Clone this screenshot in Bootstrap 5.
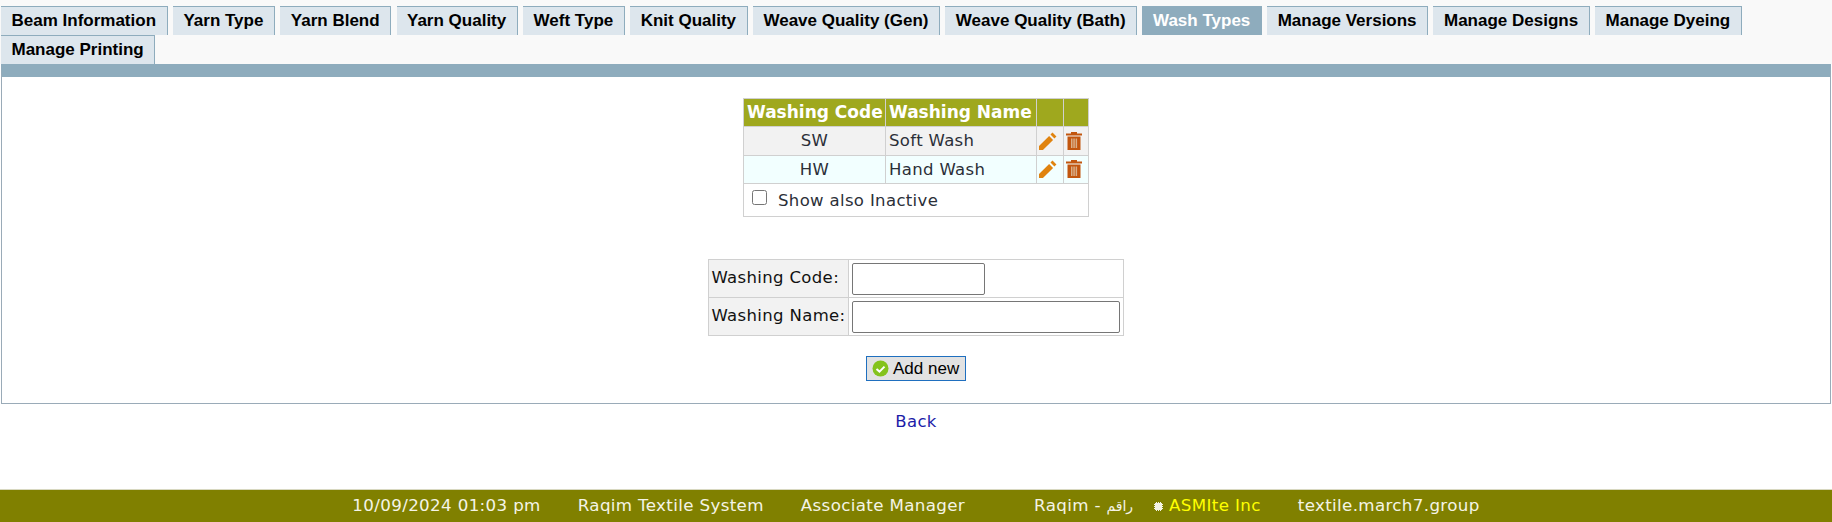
<!DOCTYPE html>
<html lang="en"><head><meta charset="utf-8"><title>Wash Types</title>
<link href="https://cdn.jsdelivr.net/npm/bootstrap@5.3.0/dist/css/bootstrap.min.css" rel="stylesheet">
<style>
html,body{height:100%}
body{background:#fff;font-family:"DejaVu Sans",Verdana,sans-serif;font-size:16.5px;letter-spacing:.35px;color:#222}
.tabstrip{background:#f9f9f9;padding:6px 0 0 1px;gap:0 5.4px}
.tabitem{font:700 17px/27px "Liberation Sans",Arial,sans-serif;letter-spacing:0;height:29px;padding:0 10.5px;background:#dde6ed;color:#000;border-top:1px solid #8eacbd;border-right:1px solid #8eacbd;text-decoration:none}
.tabitem.on{background:#8eacbd;color:#fff}
.panelbox{background:#fff;border:1px solid #9aabb8;border-top:13px solid #8eacbd;height:340px;margin:0 1px;padding-top:21px}
.listgrid,.formgrid{border-collapse:collapse;color:#2b2f38}
.listgrid{width:345px;table-layout:fixed;margin-bottom:42px}
.listgrid td,.listgrid th,.formgrid td{border:1px solid #d0d0d0;padding:0 3px}
.listgrid td{padding-top:2px}
.listgrid th{background:#9fa81e;color:#fff;height:28px;white-space:nowrap;font-weight:700;font-size:17px;letter-spacing:0}
.c1{width:142px}.c2{width:151px}.c3{width:27px}.c4{width:25px}
.listgrid .odd{background:#f2f2f2}.listgrid .even{background:#f2ffff}
.listgrid td{height:28.5px}
.listgrid .foot td{height:33px;padding-left:8px}
.listgrid .icons{padding:0 0 0 2px;line-height:0}
.listgrid input{width:15px;height:15px;margin:0 11px 0 0;vertical-align:1px;appearance:auto}
.formgrid{width:416px;color:#111}
.formgrid .lbl{background:#f2f2f2;width:142px;height:38px;white-space:nowrap}
.formgrid input{display:block;height:32px;border:1px solid #767676;border-radius:2px;background:#fff}
.inshort{width:133px}.inlong{width:268px}
.addbtn{display:inline-flex;align-items:center;gap:4px;margin-top:20px;height:25px;width:100px;padding:0 0 0 5px;border:1px solid #1f6fbf;background:#e2e2e2;color:#000;font:17px "Liberation Sans",Arial,sans-serif;letter-spacing:0;border-radius:0}
.backlink{color:#1c1ca8;text-decoration:none;line-height:20px;margin-top:8px}
.sitefoot{margin-top:auto;height:33px;background:#808000;color:#f4f4e6;white-space:nowrap;border-top:1px solid #d8d8c0;font-size:16.7px}
.sitefoot .co{color:#ffff00}
.sitefoot .ar{font-size:14px}
.gap1{margin-left:37px}.gap2{margin-left:69px}.gap3{margin-left:21px}.gap4{margin-left:6px}
</style></head>
<body>
<div class="d-flex flex-column h-100">
<div class="tabstrip d-flex flex-wrap">
<a class="tabitem" href="#">Beam Information</a><a class="tabitem" href="#">Yarn Type</a><a class="tabitem" href="#">Yarn Blend</a><a class="tabitem" href="#">Yarn Quality</a><a class="tabitem" href="#">Weft Type</a><a class="tabitem" href="#">Knit Quality</a><a class="tabitem" href="#">Weave Quality (Gen)</a><a class="tabitem" href="#">Weave Quality (Bath)</a><a class="tabitem on" href="#">Wash Types</a><a class="tabitem" href="#">Manage Versions</a><a class="tabitem" href="#">Manage Designs</a><a class="tabitem" href="#">Manage Dyeing</a><a class="tabitem" href="#">Manage Printing</a>
</div>
<div class="panelbox d-flex flex-column align-items-center">
<table class="listgrid">
<tr><th class="c1">Washing Code</th><th class="c2">Washing Name</th><th class="c3"></th><th class="c4"></th></tr>
<tr class="odd"><td class="text-center">SW</td><td>Soft Wash</td>
<td class="icons"><svg width="18" height="18" viewBox="2 2 16 16"><path fill="#e0830f" d="M14 2.5l3.5 3.5-1.8 1.8-3.5-3.5zM11 5.5l3.5 3.5L5.5 18H2v-3.5z"/></svg></td>
<td class="icons"><svg width="16" height="18" viewBox="1 1.5 16 18"><path fill="#c2560f" d="M6 1.5h6v1.5h5v2H1V3h5zM2.5 6h13v13.5h-13z"/><path fill="#d9b08a" d="M6 8h1.5v9.5H6zM8.3 8h1.5v9.5H8.3zM10.6 8h1.5v9.5h-1.5z"/></svg></td></tr>
<tr class="even"><td class="text-center">HW</td><td>Hand Wash</td>
<td class="icons"><svg width="18" height="18" viewBox="2 2 16 16"><path fill="#e0830f" d="M14 2.5l3.5 3.5-1.8 1.8-3.5-3.5zM11 5.5l3.5 3.5L5.5 18H2v-3.5z"/></svg></td>
<td class="icons"><svg width="16" height="18" viewBox="1 1.5 16 18"><path fill="#c2560f" d="M6 1.5h6v1.5h5v2H1V3h5zM2.5 6h13v13.5h-13z"/><path fill="#d9b08a" d="M6 8h1.5v9.5H6zM8.3 8h1.5v9.5H8.3zM10.6 8h1.5v9.5h-1.5z"/></svg></td></tr>
<tr class="foot"><td colspan="4"><input type="checkbox" id="inact"><label for="inact">Show also Inactive</label></td></tr>
</table>
<table class="formgrid">
<tr><td class="lbl">Washing Code:</td><td><input class="inshort" type="text"></td></tr>
<tr><td class="lbl">Washing Name:</td><td><input class="inlong" type="text"></td></tr>
</table>
<button class="addbtn" type="button"><svg width="17" height="17" viewBox="0 0 17 17"><circle cx="8.5" cy="8.5" r="8" fill="#84c31c"/><path d="M4.5 9l3 2.6 5-5" fill="none" stroke="#fff" stroke-width="2"/></svg>Add new</button>
</div>
<a class="backlink align-self-center" href="#">Back</a>
<div class="sitefoot d-flex align-items-center justify-content-center">
<span>10/09/2024 01:03 pm</span>
<span class="gap1">Raqim Textile System</span>
<span class="gap1">Associate Manager</span>
<span class="gap2">Raqim - <span class="ar">راقم</span></span>
<svg class="gap3" width="9" height="9" viewBox="0 0 9 9"><path fill="#f4f4e6" d="M1 1h7v7H1zM2 0h1v1H2zM4 0h1v1H4zM6 0h1v1H6zM2 8h1v1H2zM4 8h1v1H4zM6 8h1v1H6zM0 2h1v1H0zM0 4h1v1H0zM0 6h1v1H0zM8 2h1v1H8zM8 4h1v1H8zM8 6h1v1H8z"/></svg>
<span class="co gap4">ASMIte Inc</span>
<span class="gap1">textile.march7.group</span>
</div>
</div>
</body></html>
